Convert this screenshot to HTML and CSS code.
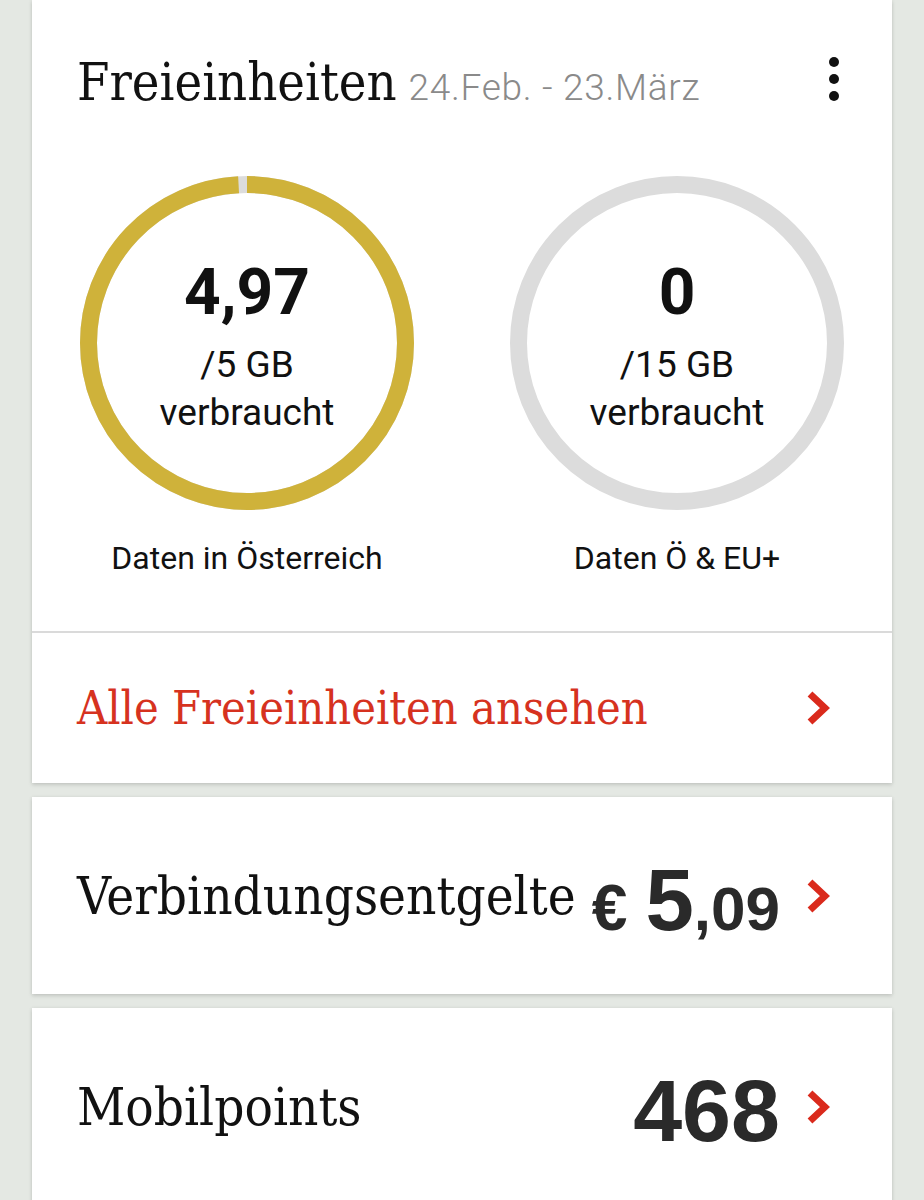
FILE: index.html
```html
<!DOCTYPE html>
<html lang="de">
<head>
<meta charset="utf-8">
<title>Freieinheiten</title>
<link rel="stylesheet" href="styles.css">
</head>
<body>
<main class="page">
  <section class="card card-usage">
    <header class="usage-head">
      <h1 class="title">Freieinheiten</h1>
      <span class="period">24.Feb. - 23.März</span>
      <button class="kebab" aria-label="Mehr">
        <svg width="12" height="46" viewBox="0 0 12 46"><circle cx="6" cy="6" r="5"/><circle cx="6" cy="23" r="5"/><circle cx="6" cy="40" r="5"/></svg>
      </button>
    </header>
    <div class="gauges">
      <div class="gauge">
        <div class="ring-wrap">
          <svg class="ring" width="334" height="334" viewBox="0 0 334 334">
            <circle class="ring-track" cx="167" cy="167" r="158.5"/>
            <circle class="ring-fill" cx="167" cy="167" r="158.5" stroke-dasharray="987 20" transform="rotate(-90 167 167)"/>
          </svg>
          <div class="ring-text">
            <div class="ring-value">4,97</div>
            <div class="ring-unit">/5 GB</div>
            <div class="ring-unit ring-used">verbraucht</div>
          </div>
        </div>
        <div class="gauge-label">Daten in Österreich</div>
      </div>
      <div class="gauge">
        <div class="ring-wrap">
          <svg class="ring" width="334" height="334" viewBox="0 0 334 334">
            <circle class="ring-track" cx="167" cy="167" r="158.5"/>
          </svg>
          <div class="ring-text">
            <div class="ring-value">0</div>
            <div class="ring-unit">/15 GB</div>
            <div class="ring-unit ring-used">verbraucht</div>
          </div>
        </div>
        <div class="gauge-label">Daten Ö &amp; EU+</div>
      </div>
    </div>
    <a class="link-row" href="#">
      <span class="link-text">Alle Freieinheiten ansehen</span>
      <svg class="chev" width="24" height="36" viewBox="0 0 24 36"><path d="M4 4 L19 18 L4 32"/></svg>
    </a>
  </section>

  <section class="card row-card">
    <span class="row-label">Verbindungsentgelte</span>
    <span class="row-value"><span class="cur">€</span><span class="euro">5</span><span class="cents">,09</span></span>
    <svg class="chev" width="24" height="36" viewBox="0 0 24 36"><path d="M4 4 L19 18 L4 32"/></svg>
  </section>

  <section class="card row-card">
    <span class="row-label">Mobilpoints</span>
    <span class="row-value"><span class="points">468</span></span>
    <svg class="chev" width="24" height="36" viewBox="0 0 24 36"><path d="M4 4 L19 18 L4 32"/></svg>
  </section>
</main>
</body>
</html>
```

FILE: styles.css
```css
html, body {
  margin: 0;
  padding: 0;
}
body {
  background: #e4e8e3;
  font-family: Roboto, "Liberation Sans", sans-serif;
  color: #111;
}
.page {
  padding: 0 32px;
  display: flex;
  flex-direction: column;
  gap: 14px;
}
.card {
  background: #fff;
  box-shadow: 0 2px 4px rgba(0, 0, 0, 0.13), 0 0 4px rgba(0, 0, 0, 0.06);
}

/* header */
.usage-head {
  display: flex;
  align-items: baseline;
  padding: 52px 52px 0 45px;
  height: 60px;
}
.title {
  margin: 0;
  font-family: "DejaVu Serif", "Liberation Serif", serif;
  font-stretch: condensed;
  font-weight: 400;
  font-size: 52px;
  line-height: 60px;
  color: #111;
}
.period {
  margin-left: 12px;
  font-family: Roboto, sans-serif;
  font-weight: 300;
  font-size: 37px;
  letter-spacing: 0.7px;
  color: #8a8a8a;
}
.kebab {
  margin-left: auto;
  align-self: flex-start;
  margin-top: 4px;
  padding: 0;
  border: 0;
  background: none;
  line-height: 0;
}
.kebab svg circle {
  fill: #111;
}

/* gauges */
.gauges {
  display: grid;
  grid-template-columns: 1fr 1fr;
  padding: 64px 0 53px;
}
.gauge {
  display: flex;
  flex-direction: column;
  align-items: center;
}
.ring-wrap {
  display: grid;
  width: 334px;
  height: 334px;
}
.ring,
.ring-text {
  grid-area: 1 / 1;
}
.ring-track {
  fill: none;
  stroke: #dcdcdc;
  stroke-width: 17;
}
.ring-fill {
  fill: none;
  stroke: #cfb23a;
  stroke-width: 17;
}
.ring-text {
  align-self: center;
  text-align: center;
  padding-top: 12px;
}
.ring-value {
  font-weight: 700;
  font-size: 64px;
  line-height: 64px;
  color: #111;
}
.ring-unit {
  margin-top: 20px;
  font-size: 37px;
  line-height: 40px;
  color: #111;
}
.ring-used {
  margin-top: 4px;
  line-height: 48px;
}
.gauge-label {
  margin-top: 28px;
  font-size: 32px;
  line-height: 40px;
  color: #111;
}

/* link row */
.link-row {
  display: flex;
  align-items: center;
  justify-content: space-between;
  height: 150px;
  padding: 0 62px 0 45px;
  border-top: 2px solid #dadada;
  text-decoration: none;
}
.link-text {
  font-family: "DejaVu Serif", "Liberation Serif", serif;
  font-stretch: condensed;
  font-size: 46.5px;
  color: #d6321f;
}
.chev {
  flex: none;
}
.chev path {
  fill: none;
  stroke: #da2a1c;
  stroke-width: 7;
  stroke-linejoin: miter;
}

/* value rows */
.row-card {
  display: flex;
  align-items: center;
  height: 197px;
  padding: 0 62px 0 45px;
}
.row-label {
  font-family: "DejaVu Serif", "Liberation Serif", serif;
  font-stretch: condensed;
  font-size: 52.5px;
  color: #111;
}
.row-value {
  margin-left: auto;
  margin-right: 26px;
  font-family: "Liberation Sans", Arial, sans-serif;
  font-weight: 700;
  color: #2a2a2a;
  display: flex;
  align-items: baseline;
  padding-top: 8px;
}
.cur {
  font-size: 64px;
  margin-right: 18px;
}
.euro {
  font-size: 87px;
}
.cents {
  font-size: 62px;
}
.points {
  font-size: 88px;
}
```
